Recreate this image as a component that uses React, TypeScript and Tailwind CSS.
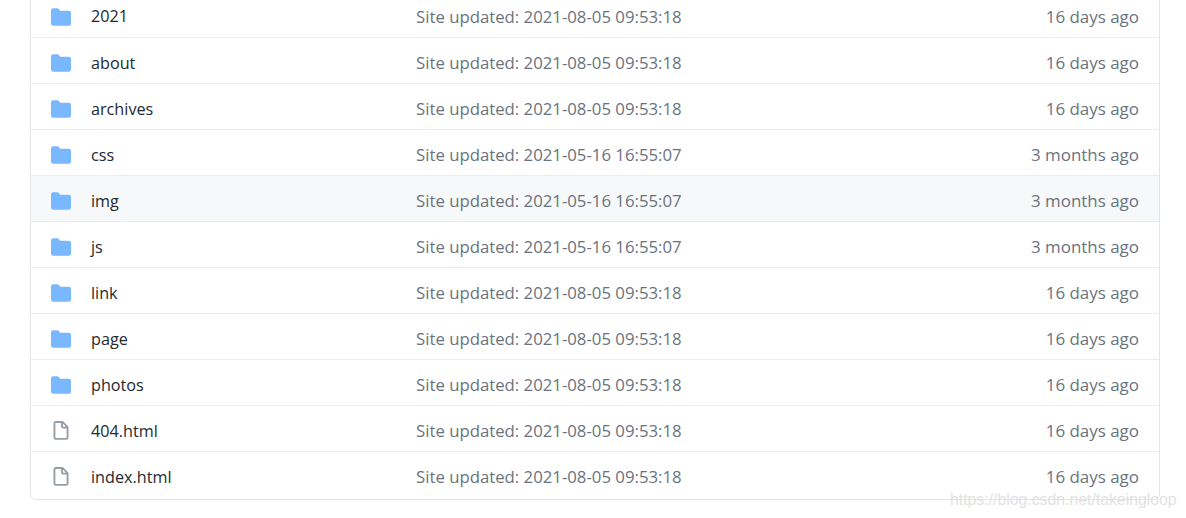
const rows = [
  { name: '2021', type: 'dir', msg: 'Site updated: 2021-08-05 09:53:18', age: '16 days ago' },
  { name: 'about', type: 'dir', msg: 'Site updated: 2021-08-05 09:53:18', age: '16 days ago' },
  { name: 'archives', type: 'dir', msg: 'Site updated: 2021-08-05 09:53:18', age: '16 days ago' },
  { name: 'css', type: 'dir', msg: 'Site updated: 2021-05-16 16:55:07', age: '3 months ago' },
  { name: 'img', type: 'dir', msg: 'Site updated: 2021-05-16 16:55:07', age: '3 months ago', hover: true },
  { name: 'js', type: 'dir', msg: 'Site updated: 2021-05-16 16:55:07', age: '3 months ago' },
  { name: 'link', type: 'dir', msg: 'Site updated: 2021-08-05 09:53:18', age: '16 days ago' },
  { name: 'page', type: 'dir', msg: 'Site updated: 2021-08-05 09:53:18', age: '16 days ago' },
  { name: 'photos', type: 'dir', msg: 'Site updated: 2021-08-05 09:53:18', age: '16 days ago' },
  { name: '404.html', type: 'file', msg: 'Site updated: 2021-08-05 09:53:18', age: '16 days ago' },
  { name: 'index.html', type: 'file', msg: 'Site updated: 2021-08-05 09:53:18', age: '16 days ago' },
];

function FolderIcon() {
  return (
    <svg width="20" height="20" viewBox="0 0 16 16" fill="#79b8ff">
      <path d="M1.75 1A1.75 1.75 0 000 2.75v10.5C0 14.216.784 15 1.75 15h12.5A1.75 1.75 0 0016 13.25v-8.5A1.75 1.75 0 0014.25 3H7.5a.25.25 0 01-.2-.1l-.9-1.2C6.07 1.26 5.55 1 5 1H1.75z" />
    </svg>
  );
}

function FileIcon() {
  return (
    <svg width="20" height="20" viewBox="0 0 16 16" fill="#959da5">
      <path
        fillRule="evenodd"
        d="M3.75 1.5a.25.25 0 00-.25.25v11.5c0 .138.112.25.25.25h8.5a.25.25 0 00.25-.25V6H9.75A1.75 1.75 0 018 4.25V1.5H3.75zm5.75.56v2.19c0 .138.112.25.25.25h2.19L9.5 2.06zM2 1.75C2 .784 2.784 0 3.75 0h5.086c.464 0 .909.184 1.237.513l3.414 3.414c.329.328.513.773.513 1.237v8.086A1.75 1.75 0 0112.25 15h-8.5A1.75 1.75 0 012 13.25V1.75z"
      />
    </svg>
  );
}

export default function App() {
  return (
    <div className="relative h-[518px] w-[1186px] overflow-hidden bg-white font-['Open_Sans',sans-serif]">
      <div className="ml-[30px] -mt-[10px] w-[1130px] rounded-b-md border border-[#e1e4e8]">
        {rows.map((row, i) => (
          <div
            key={row.name}
            className={`flex items-center pl-5 pr-5 pt-[5px] ${i === rows.length - 1 ? 'h-[48px] pb-[2px]' : 'h-[46px]'} ${i > 0 ? 'border-t border-[#eaecef]' : ''} ${row.hover ? 'bg-[#f6f8fa]' : ''}`}
          >
            <div className="flex w-10 shrink-0 items-center">
              {row.type === 'dir' ? <FolderIcon /> : <FileIcon />}
            </div>
            <div className="w-[325px] shrink-0 text-[16.2px] text-[#24292e]">{row.name}</div>
            <div className="flex-1 text-[16.76px] text-[#6a737d]">{row.msg}</div>
            <div className="text-[16.95px] text-[#6a737d]">{row.age}</div>
          </div>
        ))}
      </div>
      <div className="absolute left-[950px] top-[491px] font-['Liberation_Sans',sans-serif] text-[15.8px] leading-[18px] text-[#e2e2e2]">
        https://blog.csdn.net/takeingloop
      </div>
    </div>
  );
}
